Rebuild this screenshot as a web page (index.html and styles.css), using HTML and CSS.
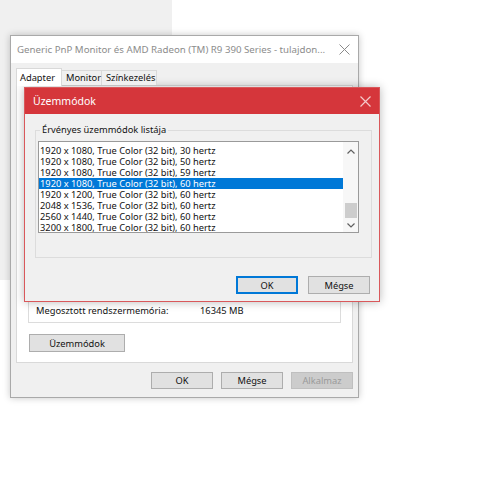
FILE: index.html
```html
<!DOCTYPE html>
<html lang="hu">
<head>
<meta charset="utf-8">
<link rel="stylesheet" href="styles.css">
</head>
<body>
<div class="desk">
  <div class="backdrop"></div>

  <div class="win">
    <div class="win-title">
      <span class="win-title-text">Generic PnP Monitor és AMD Radeon (TM) R9 390 Series - tulajdon...</span>
      <svg class="win-close" width="11" height="11" viewBox="0 0 11 11"><path d="M0.5 0.5 L10.5 10.5 M10.5 0.5 L0.5 10.5" stroke="#8a8a8a" stroke-width="1" fill="none"/></svg>
    </div>
    <div class="tabs">
      <div class="tab tab-active">Adapter</div>
      <div class="tab tab-monitor">Monitor</div>
      <div class="tab tab-color">Színkezelés</div>
    </div>
    <div class="panel">
      <div class="membox">
        <div class="memrow">
          <span class="memlabel">Megosztott rendszermemória:</span>
          <span class="memval">16345 MB</span>
        </div>
      </div>
      <button class="btn btn-modes">Üzemmódok</button>
    </div>
    <div class="win-buttons">
      <button class="btn btn-std">OK</button>
      <button class="btn btn-std">Mégse</button>
      <button class="btn btn-std btn-disabled">Alkalmaz</button>
    </div>
  </div>

  <div class="dlg">
    <div class="dlg-title">
      <span class="dlg-title-text">Üzemmódok</span>
      <svg class="dlg-close" width="11" height="11" viewBox="0 0 11 11"><path d="M0.5 0.5 L10.5 10.5 M10.5 0.5 L0.5 10.5" stroke="#f4c9ca" stroke-width="1.2" fill="none"/></svg>
    </div>
    <div class="dlg-body">
      <fieldset class="group">
        <legend class="group-label">Érvényes üzemmódok listája</legend>
        <div class="listbox">
          <div class="list-rows">
            <div class="row">1920 x 1080, True Color (32 bit), 30 hertz</div>
            <div class="row">1920 x 1080, True Color (32 bit), 50 hertz</div>
            <div class="row">1920 x 1080, True Color (32 bit), 59 hertz</div>
            <div class="row row-sel">1920 x 1080, True Color (32 bit), 60 hertz</div>
            <div class="row">1920 x 1200, True Color (32 bit), 60 hertz</div>
            <div class="row">2048 x 1536, True Color (32 bit), 60 hertz</div>
            <div class="row">2560 x 1440, True Color (32 bit), 60 hertz</div>
            <div class="row">3200 x 1800, True Color (32 bit), 60 hertz</div>
          </div>
          <div class="scroll">
            <svg class="arrow" width="8" height="5" viewBox="0 0 8 5"><path d="M0.5 4.5 L4 1 L7.5 4.5" stroke="#606060" stroke-width="1.2" fill="none"/></svg>
            <div class="track"><div class="thumb"></div></div>
            <svg class="arrow" width="8" height="5" viewBox="0 0 8 5"><path d="M0.5 0.5 L4 4 L7.5 0.5" stroke="#606060" stroke-width="1.2" fill="none"/></svg>
          </div>
        </div>
      </fieldset>
      <div class="dlg-buttons">
        <button class="btn btn-dlg btn-focus">OK</button>
        <button class="btn btn-dlg">Mégse</button>
      </div>
    </div>
  </div>
</div>
</body>
</html>
```

FILE: styles.css
```css
html, body {
  margin: 0;
  padding: 0;
  background: #ffffff;
}
body {
  font-family: "Noto Sans", "Open Sans", sans-serif;
  font-size: 9.3px;
  color: #111;
}
.desk {
  position: relative;
  width: 480px;
  height: 480px;
  overflow: hidden;
}
.backdrop {
  position: absolute;
  left: 0;
  top: 0;
  width: 172px;
  height: 280px;
  background: #f0f0f0;
}

/* outer properties window */
.win {
  position: absolute;
  left: 10px;
  top: 35px;
  width: 347px;
  height: 361px;
  border: 1px solid #a9a9a9;
  background: #f0f0f0;
  box-shadow: 0 0 7px rgba(0,0,0,0.22);
  display: flex;
  flex-direction: column;
}
.win-title {
  height: 27px;
  flex: none;
  background: #ffffff;
  display: flex;
  align-items: center;
  justify-content: space-between;
  padding: 0 8px 0 6px;
  color: #8c8c8c;
  font-size: 9.7px;
}
.win-title-text {
  white-space: nowrap;
}
.win-close {
  display: block;
}
.tabs {
  display: flex;
  align-items: flex-end;
  height: 18px;
  flex: none;
  margin-top: 5px;
  padding-left: 5px;
  position: relative;
  z-index: 1;
  margin-bottom: -1px;
}
.tab {
  height: 15px;
  line-height: 14px;
  border: 1px solid #d9d9d9;
  border-bottom: none;
  background: #f0f0f0;
  padding: 0 4px;
  box-sizing: border-box;
  margin-bottom: 1px;
}
.tab-active {
  width: 46px;
  height: 18px;
  line-height: 17px;
  background: #ffffff;
  margin-bottom: 0;
  padding-left: 3px;
}
.tab-monitor {
  width: 40px;
  border-left: none;
}
.tab-color {
  width: 55px;
  border-left: none;
}
.panel {
  margin: 0 5px 0 5px;
  height: 278px;
  flex: none;
  box-sizing: border-box;
  background: #ffffff;
  border: 1px solid #d9d9d9;
  display: flex;
  flex-direction: column;
  align-items: flex-start;
  padding: 0 0 0 11px;
}
.membox {
  margin-top: 168px;
  width: 313px;
  height: 69px;
  box-sizing: border-box;
  border: 1px solid #dcdcdc;
  border-top: none;
  display: flex;
  align-items: flex-end;
}
.memrow {
  display: flex;
  padding: 0 0 5px 7px;
  line-height: 12px;
}
.memlabel {
  width: 164px;
}
.btn {
  font-family: inherit;
  font-size: 9.3px;
  color: #111;
  background: #e1e1e1;
  border: 1px solid #adadad;
  box-sizing: border-box;
  padding: 0;
  margin: 0;
}
.btn-modes {
  margin-top: 11px;
  margin-left: 1px;
  width: 96px;
  height: 18px;
}
.win-buttons {
  display: flex;
  justify-content: flex-end;
  gap: 8px;
  margin-top: 9px;
  padding-right: 5px;
}
.btn-std {
  width: 62px;
  height: 17px;
}
.btn-disabled {
  background: #cccccc;
  border-color: #bfbfbf;
  color: #9a9a9a;
}

/* modal dialog */
.dlg {
  position: absolute;
  left: 24px;
  top: 87px;
  width: 354px;
  height: 213px;
  border: 1px solid #d9585b;
  background: #f0f0f0;
  box-shadow: 0 0 9px rgba(0,0,0,0.28);
  display: flex;
  flex-direction: column;
}
.dlg-title {
  height: 26px;
  flex: none;
  background: #d5363b;
  display: flex;
  align-items: center;
  justify-content: space-between;
  padding: 0 8px 0 8px;
  color: #ffffff;
  font-size: 10.5px;
}
.dlg-close {
  display: block;
}
.dlg-body {
  padding: 10px 7px 0 10px;
  display: flex;
  flex-direction: column;
}
.group {
  margin: 0;
  padding: 5px 12px 24px 2px;
  border: 1px solid #dcdcdc;
  min-width: 0;
}
.group-label {
  margin-left: 2px;
  padding: 0 2px;
  line-height: 12px;
  font-size: 9.3px;
}
.listbox {
  display: flex;
  height: 92px;
  box-sizing: border-box;
  border: 1px solid #9a9a9a;
  background: #ffffff;
}
.list-rows {
  flex: 1;
  padding-top: 3px;
}
.row {
  height: 11px;
  line-height: 11px;
  padding-left: 1px;
  white-space: nowrap;
  overflow: hidden;
}
.row-sel {
  background: #0078d7;
  color: #ffffff;
}
.scroll {
  width: 15px;
  display: flex;
  flex-direction: column;
  align-items: center;
  padding: 7px 0 4px 0;
  box-sizing: border-box;
  background: #f7f7f7;
}
.arrow {
  display: block;
}
.track {
  flex: 1;
  width: 12px;
  display: flex;
  flex-direction: column;
  justify-content: flex-end;
  padding-bottom: 5px;
}
.thumb {
  height: 15px;
  background: #cdcdcd;
}
.dlg-buttons {
  display: flex;
  justify-content: flex-end;
  gap: 10px;
  margin-top: 18px;
  padding-right: 2px;
}
.btn-dlg {
  width: 62px;
  height: 18px;
}
.btn-focus {
  border: 1px solid #0078d7;
  box-shadow: inset 0 0 0 1px #0078d7;
}
```
